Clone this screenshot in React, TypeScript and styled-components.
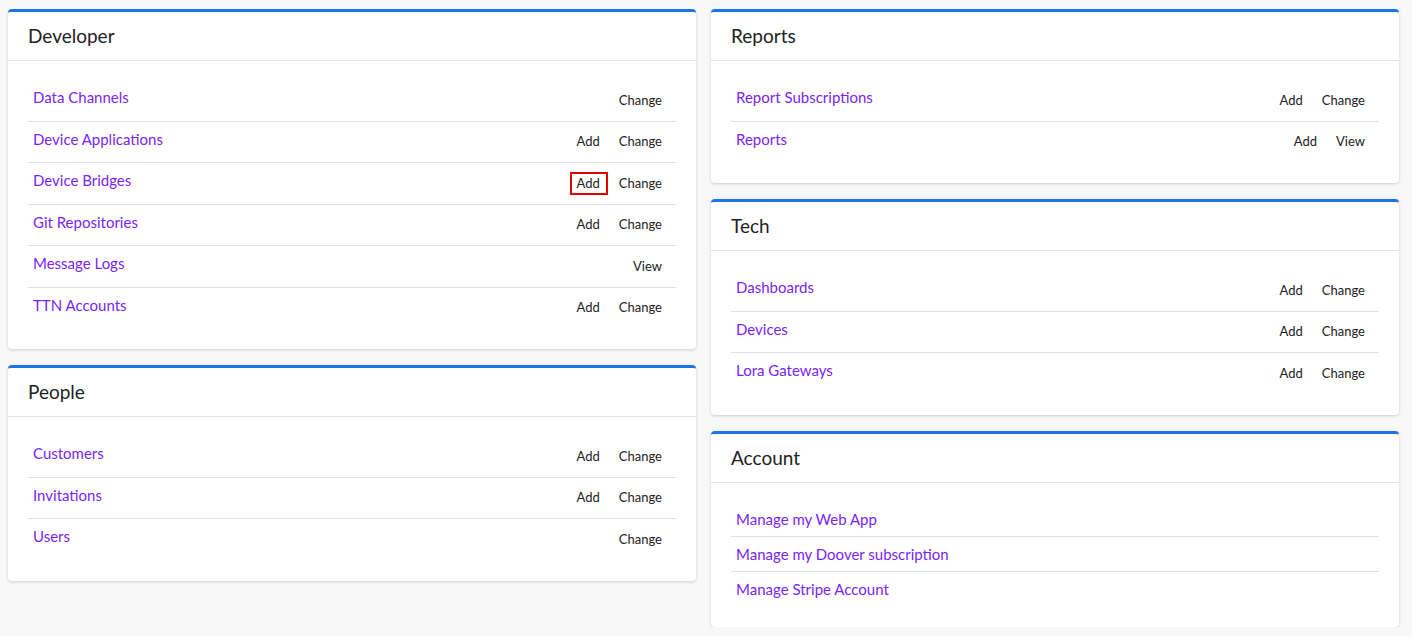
import React from "react";
import styled, { createGlobalStyle } from "styled-components";

const GlobalStyle = createGlobalStyle`
  html, body {
    margin: 0;
    padding: 0;
    background: #f8f8f8;
  }
  body {
    font-family: Lato, "Open Sans", sans-serif;
    color: #222;
  }
`;

const Page = styled.div`
  display: grid;
  grid-template-columns: 688px 688px;
  column-gap: 15px;
  padding: 9px 8px 0 8px;
  align-items: start;
`;

const Column = styled.div`
  display: flex;
  flex-direction: column;
  gap: 16px;
`;

const Card = styled.section`
  background: #fff;
  border-top: 3px solid #1a76e8;
  border-radius: 4px;
  box-shadow: 0 1px 3px rgba(0, 0, 0, 0.18);
`;

const CardHeader = styled.header`
  height: 49px;
  box-sizing: border-box;
  display: flex;
  align-items: center;
  padding: 0 20px 1px;
  border-bottom: 1px solid #e2e2e2;
`;

const Title = styled.h2`
  margin: 0;
  font-size: 19px;
  font-weight: 400;
  color: #222;
`;

const CardBody = styled.div`
  padding: 19px 20px 20px;
`;

const Row = styled.div<{ $compact?: boolean }>`
  display: flex;
  justify-content: space-between;
  align-items: flex-start;
  box-sizing: border-box;
  height: ${(p) => (p.$compact ? "35px" : "41.5px")};
  padding: 6px 6px 0 5px;
  border-bottom: 1px solid #e0e0e0;
  &:last-child {
    border-bottom: none;
  }
`;

const LinkText = styled.a`
  font-size: 15px;
  line-height: 22px;
  color: #7a25f5;
  text-decoration: none;
  cursor: pointer;
`;

const Actions = styled.div`
  display: flex;
  align-items: center;
  gap: 4px;
  height: 28px;
`;

const ActionButton = styled.button<{ $focused?: boolean }>`
  font-family: Lato, "Open Sans", sans-serif;
  font-size: 13px;
  color: #222;
  background: none;
  border: 2px solid ${(p) => (p.$focused ? "#e00000" : "transparent")};
  padding: 1px 6px 1px 5px;
  line-height: 17px;
  cursor: pointer;
`;

type Item = {
  label: string;
  actions?: string[];
  focus?: string;
};

type Section = {
  title: string;
  items: Item[];
};

const left: Section[] = [
  {
    title: "Developer",
    items: [
      { label: "Data Channels", actions: ["Change"] },
      { label: "Device Applications", actions: ["Add", "Change"] },
      { label: "Device Bridges", actions: ["Add", "Change"], focus: "Add" },
      { label: "Git Repositories", actions: ["Add", "Change"] },
      { label: "Message Logs", actions: ["View"] },
      { label: "TTN Accounts", actions: ["Add", "Change"] },
    ],
  },
  {
    title: "People",
    items: [
      { label: "Customers", actions: ["Add", "Change"] },
      { label: "Invitations", actions: ["Add", "Change"] },
      { label: "Users", actions: ["Change"] },
    ],
  },
];

const right: Section[] = [
  {
    title: "Reports",
    items: [
      { label: "Report Subscriptions", actions: ["Add", "Change"] },
      { label: "Reports", actions: ["Add", "View"] },
    ],
  },
  {
    title: "Tech",
    items: [
      { label: "Dashboards", actions: ["Add", "Change"] },
      { label: "Devices", actions: ["Add", "Change"] },
      { label: "Lora Gateways", actions: ["Add", "Change"] },
    ],
  },
  {
    title: "Account",
    items: [
      { label: "Manage my Web App" },
      { label: "Manage my Doover subscription" },
      { label: "Manage Stripe Account" },
    ],
  },
];

const Panel: React.FC<{ section: Section }> = ({ section }) => (
  <Card>
    <CardHeader>
      <Title>{section.title}</Title>
    </CardHeader>
    <CardBody>
      {section.items.map((item) => (
        <Row key={item.label} $compact={!item.actions}>
          <LinkText>{item.label}</LinkText>
          {item.actions && (
            <Actions>
              {item.actions.map((a) => (
                <ActionButton key={a} $focused={item.focus === a}>
                  {a}
                </ActionButton>
              ))}
            </Actions>
          )}
        </Row>
      ))}
    </CardBody>
  </Card>
);

export default function App() {
  return (
    <>
      <GlobalStyle />
      <Page>
        <Column>
          {left.map((s) => (
            <Panel key={s.title} section={s} />
          ))}
        </Column>
        <Column>
          {right.map((s) => (
            <Panel key={s.title} section={s} />
          ))}
        </Column>
      </Page>
    </>
  );
}
